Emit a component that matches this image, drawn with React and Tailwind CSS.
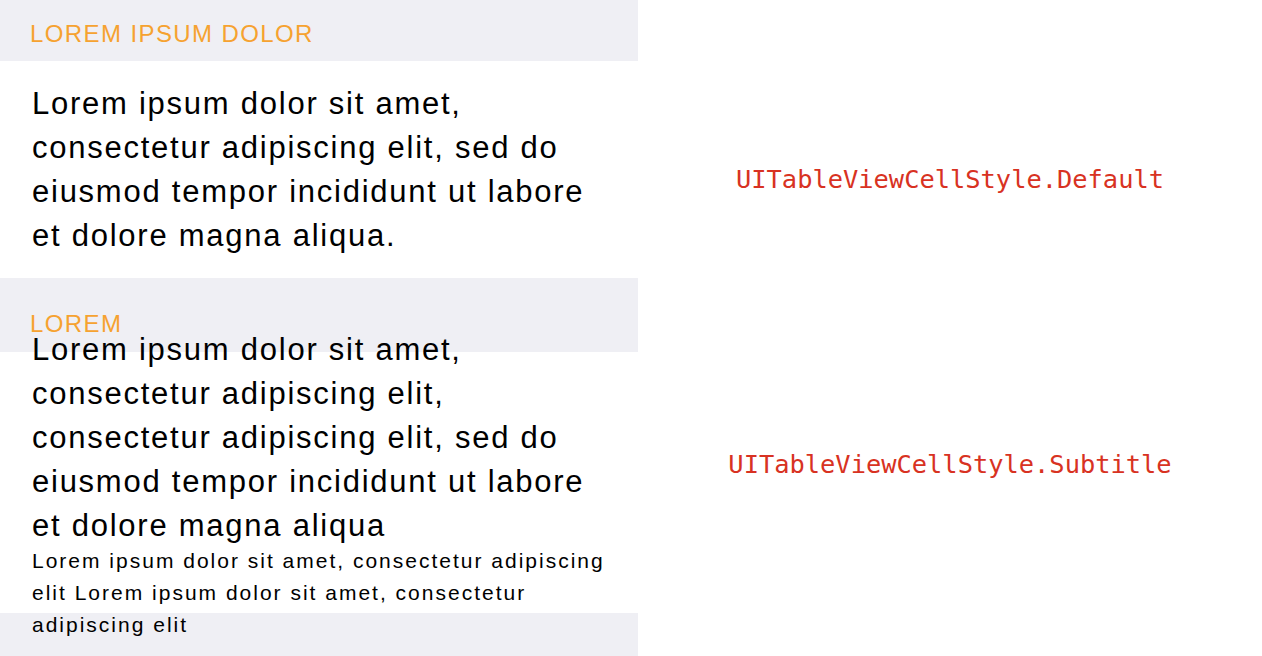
export default function App() {
  const big = "font-['Liberation_Sans',Arial,sans-serif] text-[31px] leading-[44px] tracking-[1.75px] text-black whitespace-nowrap";
  const small = "font-['Liberation_Sans',Arial,sans-serif] text-[21px] leading-[32px] tracking-[2px] text-black whitespace-nowrap";
  const head = "font-['Liberation_Sans',Arial,sans-serif] text-[24px] leading-[24px] tracking-[1.4px] text-[#f6a230]";
  const mono = "font-['DejaVu_Sans_Mono',monospace] text-[25.4px] leading-[25px] text-[#d83222] whitespace-nowrap";
  return (
    <div className="flex h-[656px] w-full overflow-hidden bg-white">
      <div className="w-[638px] shrink-0">
        <div className="h-[61px] bg-[#efeff4] pl-[30px] pt-[22px]">
          <div className={head}>LOREM IPSUM DOLOR</div>
        </div>
        <div className="h-[217px] bg-white pl-[32px] pt-[21px]">
          <div className={big}>
            Lorem ipsum dolor sit amet,<br />
            consectetur adipiscing elit, sed do<br />
            eiusmod tempor incididunt ut labore<br />
            et dolore magna aliqua.
          </div>
        </div>
        <div className="h-[74px] bg-[#efeff4] pl-[30px] pt-[34px]">
          <div className={head}>LOREM</div>
        </div>
        <div className="flow-root h-[261px] bg-white pl-[32px]">
          <div className={big + " -mt-[24px]"}>
            Lorem ipsum dolor sit amet,<br />
            consectetur adipiscing elit,<br />
            consectetur adipiscing elit, sed do<br />
            eiusmod tempor incididunt ut labore<br />
            et dolore magna aliqua
          </div>
          <div className={small + " -mt-[3px]"}>
            Lorem ipsum dolor sit amet, consectetur adipiscing<br />
            elit Lorem ipsum dolor sit amet, consectetur<br />
            adipiscing elit
          </div>
        </div>
        <div className="h-[60px] bg-[#efeff4]" />
      </div>
      <div className="flex flex-1 flex-col items-center pt-[167px]">
        <div className={mono}>UITableViewCellStyle.Default</div>
        <div className={mono + " mt-[260px]"}>UITableViewCellStyle.Subtitle</div>
      </div>
    </div>
  );
}
